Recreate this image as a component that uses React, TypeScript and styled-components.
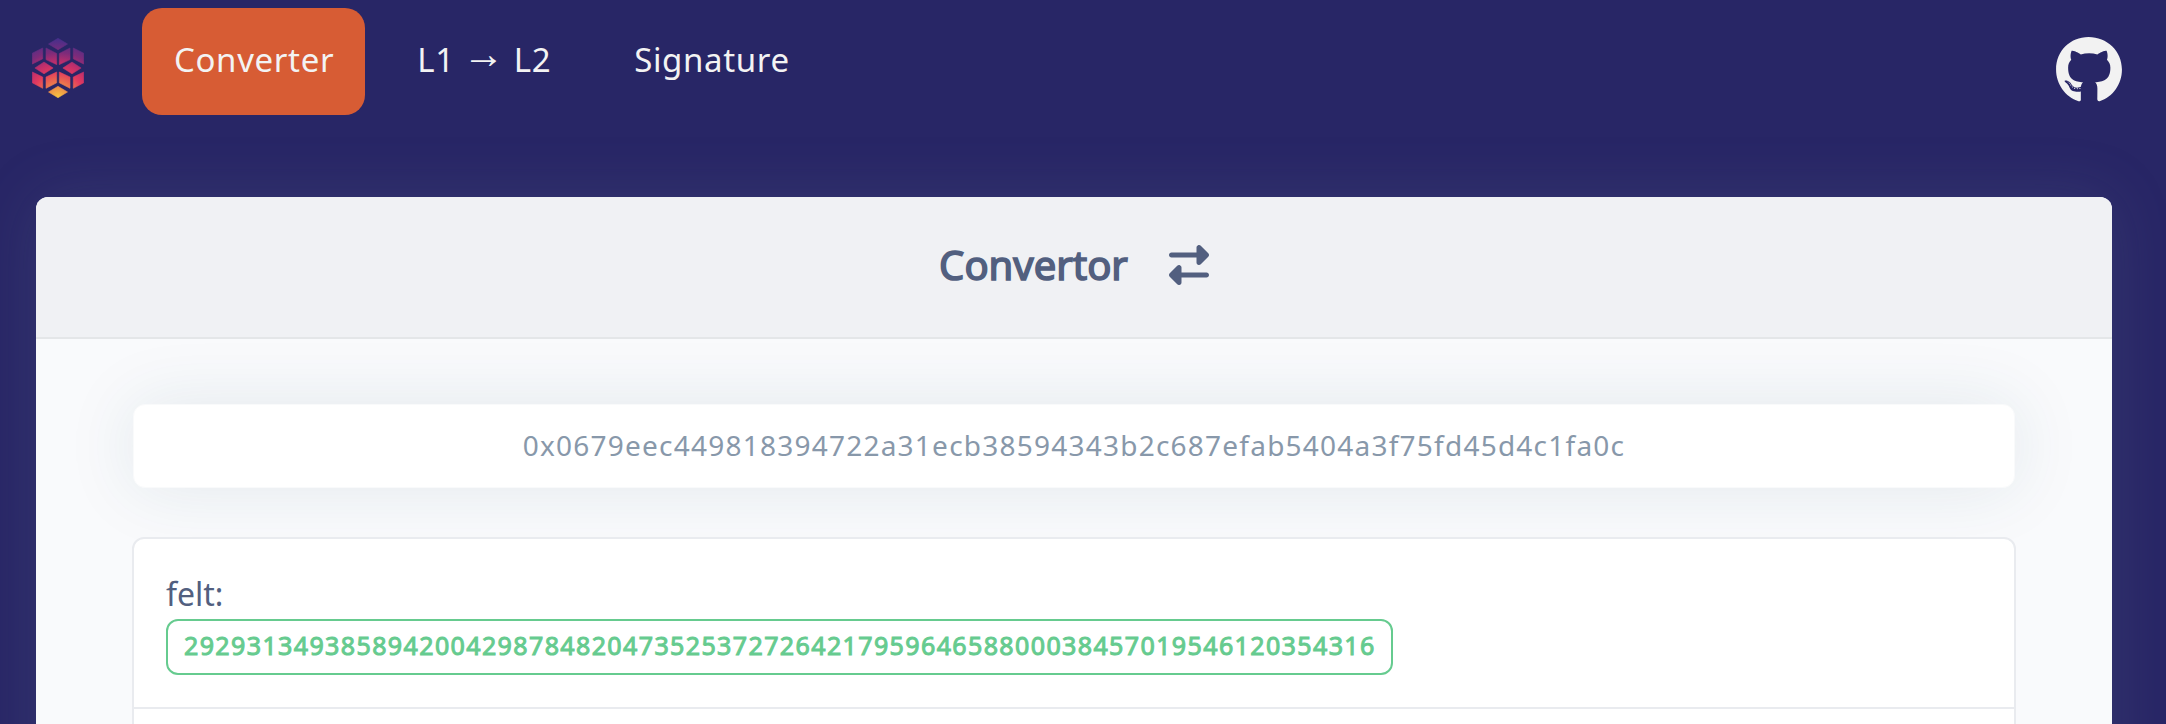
import React from "react";
import styled, { createGlobalStyle } from "styled-components";
import { FaGithub } from "react-icons/fa";
import { FaRightLeft } from "react-icons/fa6";

const GlobalStyle = createGlobalStyle`
  * { box-sizing: border-box; }
  body {
    margin: 0;
    background: #282666;
    color: #525f7f;
    font-family: "Noto Sans", "Open Sans", sans-serif;
  }
`;

const Page = styled.div`
  display: flex;
  flex-direction: column;
  height: 100vh;
  overflow: hidden;
`;

const TopBar = styled.header`
  display: flex;
  flex: none;
  align-items: flex-start;
  height: 197px;
  padding: 8px 43px 0 32px;
`;

const Logo = styled.svg`
  flex: none;
  width: 52px;
  height: 60px;
  margin: 30px 58px 0 0;
`;

const Nav = styled.nav`
  display: flex;
  flex: 1;
  gap: 20px;
`;

const NavLink = styled.a<{ $active?: boolean }>`
  display: flex;
  align-items: center;
  height: 107px;
  padding: 0 31px 3px 32px;
  border-radius: 20px;
  background: ${(p) => (p.$active ? "#d75c34" : "transparent")};
  color: #f3f3f3;
  font-size: 33px;
  letter-spacing: 0.65px;
  line-height: 48px;
  white-space: pre;
`;

const Arrow = styled.span`
  width: 59px;
  padding: 0 2px 16px 0;
  text-align: center;
  font-size: 42px;
  line-height: 40px;
  letter-spacing: 0;
`;

const GithubLink = styled.a`
  display: flex;
  margin-top: 28px;
  color: #f2f2f2;
`;

const Card = styled.main`
  display: flex;
  flex: none;
  flex-direction: column;
  margin: 0 54px 0 36px;
  border-radius: 12px;
  background: #f9fafc;
  box-shadow: 0 0 64px rgba(136, 152, 170, 0.15);
`;

const CardHeader = styled.div`
  display: flex;
  align-items: center;
  justify-content: center;
  gap: 41px;
  height: 142px;
  padding-bottom: 4px;
  border-bottom: 2px solid #e4e6e8;
  border-radius: 12px 12px 0 0;
  background: #f0f1f4;
`;

const Title = styled.h1`
  margin: 0;
  font-size: 40px;
  font-weight: 400;
  line-height: 54px;
  -webkit-text-stroke: 1.6px #525f7f;
`;

const CardBody = styled.div`
  display: flex;
  flex-direction: column;
  gap: 49px;
  padding: 65px 96px 96px;
`;

const ValueInput = styled.div`
  height: 84px;
  margin: 0 1px;
  border: 1px solid #f9fafb;
  border-radius: 12px;
  background: #fff;
  box-shadow: 0 0 70px rgba(31, 75, 101, 0.1);
  color: #8898aa;
  font-size: 28px;
  letter-spacing: 1.23px;
  line-height: 80px;
  text-align: center;
`;

const ResultList = styled.ul`
  position: relative;
  margin: 0;
  padding: 0;
  border: 2px solid #e9ebef;
  border-radius: 12px;
  background: #fff;
  list-style: none;
`;

const ResultItem = styled.li`
  display: flex;
  flex-direction: column;
  align-items: flex-start;
  height: 168px;
  padding: 30px 32px;

  & + & {
    border-top: 2px solid #e9ebef;
  }
`;

const Label = styled.span`
  height: 50px;
  font-size: 32px;
  line-height: 49px;
`;

const Badge = styled.span`
  height: 56px;
  padding: 0 15px 0 16px;
  border: 2px solid #66cb8f;
  border-radius: 12px;
  color: #66cb8f;
  font-size: 25px;
  letter-spacing: 1.38px;
  line-height: 48px;
  -webkit-text-stroke: 1px #66cb8f;
`;

const cubes = [
  "26,0.3 35.5,6 26,11.7 16.5,6",
  "0.3,15.2 10.7,10 10.7,20.8 0.3,26",
  "14,10 24.7,15.5 24.7,26.6 14,21.6",
  "38,10 27.3,15.5 27.3,26.6 38,21.6",
  "51.7,15.2 41.3,10 41.3,20.8 51.7,26",
  "12,24.1 21.1,30 12,35.8 2.9,30",
  "40,24.1 49.1,30 40,35.8 30.9,30",
  "0.3,34 10.7,39 10.7,50.3 0.3,44.8",
  "14,39 24.7,34 24.7,44.8 14,50.3",
  "38,39 27.3,34 27.3,44.8 38,50.3",
  "51.7,34 41.3,39 41.3,50.3 51.7,44.8",
  "26,48.3 35.5,54 26,59.7 16.5,54",
];

const HexLogo = () => (
  <Logo viewBox="0 0 52 60">
    <defs>
      <radialGradient id="glow" gradientUnits="userSpaceOnUse" cx="26" cy="60" r="60">
        <stop offset="0" stopColor="#f7c93f" />
        <stop offset="0.16" stopColor="#ee9648" />
        <stop offset="0.3" stopColor="#e96850" />
        <stop offset="0.44" stopColor="#e23a5f" />
        <stop offset="0.58" stopColor="#c22f6b" />
        <stop offset="0.76" stopColor="#7d2b7a" />
        <stop offset="1" stopColor="#432f8c" />
      </radialGradient>
    </defs>
    {cubes.map((points) => (
      <polygon
        key={points}
        points={points}
        fill="url(#glow)"
        stroke="url(#glow)"
        strokeWidth="0.6"
        strokeLinejoin="round"
      />
    ))}
  </Logo>
);

export default function App() {
  return (
    <>
      <GlobalStyle />
      <Page>
        <TopBar>
          <HexLogo />
          <Nav>
            <NavLink $active>Converter</NavLink>
            <NavLink>
              L1<Arrow>→</Arrow>L2
            </NavLink>
            <NavLink>Signature</NavLink>
          </Nav>
          <GithubLink aria-label="GitHub">
            <FaGithub size={68} />
          </GithubLink>
        </TopBar>
        <Card>
          <CardHeader>
            <Title>Convertor</Title>
            <FaRightLeft size={40} />
          </CardHeader>
          <CardBody>
            <ValueInput>
              0x0679eec449818394722a31ecb38594343b2c687efab5404a3f75fd45d4c1fa0c
            </ValueInput>
            <ResultList>
              <ResultItem>
                <Label>felt:</Label>
                <Badge>
                  2929313493858942004298784820473525372726421795964658800038457019546120354316
                </Badge>
              </ResultItem>
              <ResultItem />
            </ResultList>
          </CardBody>
        </Card>
      </Page>
    </>
  );
}
